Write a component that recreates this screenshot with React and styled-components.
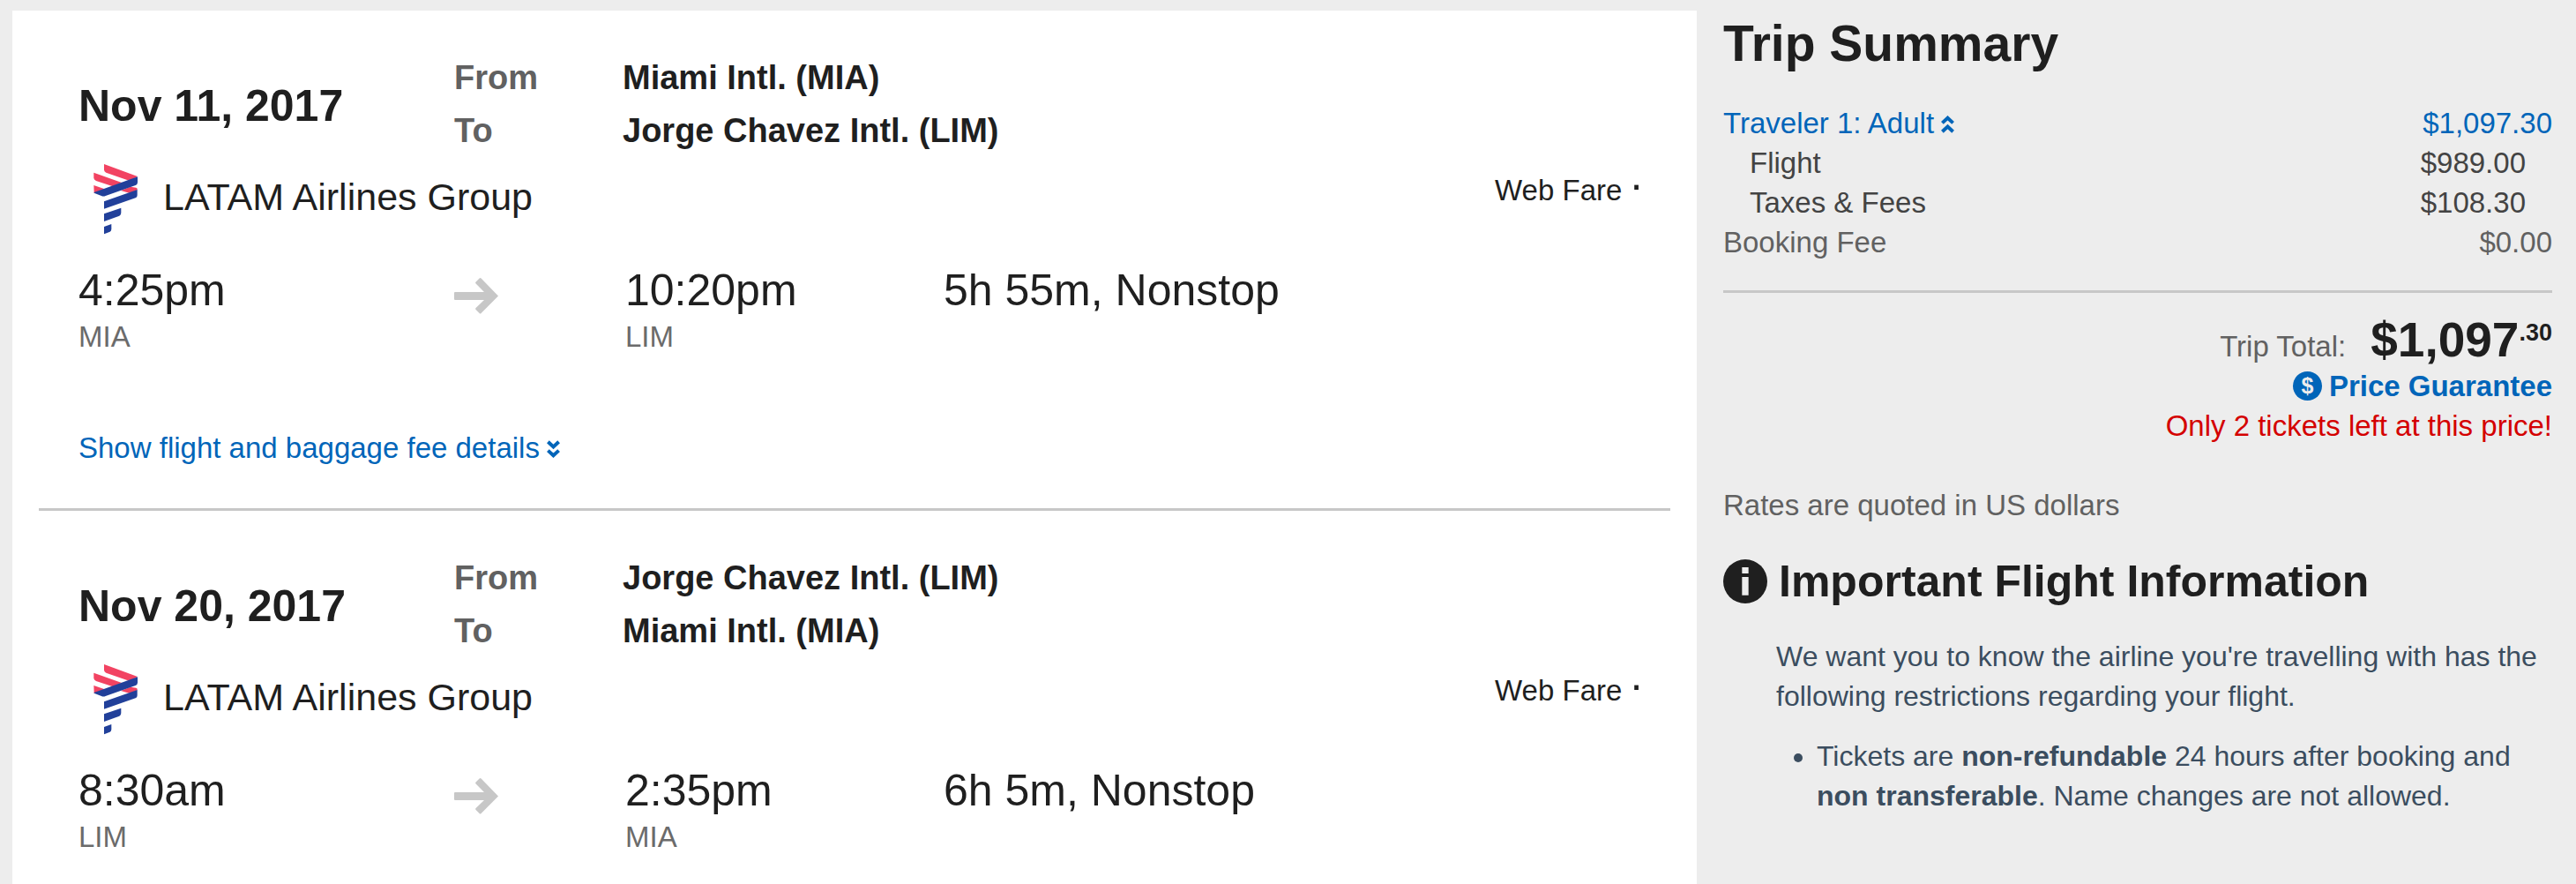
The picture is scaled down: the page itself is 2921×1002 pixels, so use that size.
import React from 'react';
import styled, { createGlobalStyle } from 'styled-components';

const GlobalStyle = createGlobalStyle`
    * {
        box-sizing: border-box;
    }

    body {
        margin: 0;
        background-color: #ededed;
        color: #1f1f1f;
        font-family: "Liberation Sans", Arial, sans-serif;
        font-size: 33px;
        line-height: 45px;
    }
`;

const Page = styled.div`
    display: grid;
    grid-template-columns: minmax(0, 1910fr) minmax(0, 940fr);
    column-gap: 30px;
    min-height: 100vh;
    padding: 12px 27px 0 14px;
`;

const Flights = styled.main`
    background-color: #fff;
    padding: 0 30px;
`;

const Leg = styled.section`
    padding: 46px 30px 46px 45px;

    & + & {
        border-top: 3px solid #c7c7c7;
    }
`;

const LegHeader = styled.header`
    display: grid;
    grid-template-columns: 426fr 191fr 1158fr;
    align-items: center;
`;

const LegDate = styled.h2`
    margin: 0;
    padding-top: 4px;
    font-size: 50px;
    line-height: 60px;
`;

const Route = styled.dl`
    grid-column: 2 / 4;
    display: grid;
    grid-template-columns: 191fr 1158fr;
    margin: 0;
    font-size: 38px;
    font-weight: bold;
    line-height: 60px;

    dt {
        color: #616161;
    }

    dd {
        margin: 0;
    }
`;

const AirlineRow = styled.div`
    display: flex;
    align-items: flex-start;
    gap: 16px;
    margin-top: 8px;
`;

const AirlineLogo = styled.svg`
    width: 80px;
    height: 80px;
`;

const AirlineName = styled.span`
    font-size: 43px;
    line-height: 74px;
`;

const Fare = styled.span`
    display: flex;
    align-items: flex-start;
    margin-left: auto;
    line-height: 60px;
`;

const FareMark = styled.span`
    padding-left: 8px;
    font-size: 50px;
    line-height: 46px;
`;

const Times = styled.div`
    display: grid;
    grid-template-columns: 426fr 194fr 361fr 794fr;
    align-items: start;
    margin-top: 33px;
`;

const Time = styled.div`
    font-size: 50px;
    line-height: 60px;
`;

const Airport = styled.div`
    color: #6b6b6b;
`;

const Arrow = styled.svg`
    width: 50px;
    height: 41px;
    margin-top: 16px;
`;

const LinkButton = styled.button`
    display: inline-flex;
    align-items: center;
    gap: 8px;
    padding: 0;
    border: 0;
    background: none;
    color: #0065b9;
    font: inherit;
    text-align: left;
    cursor: pointer;

    &:hover {
        text-decoration: underline;
    }
`;

const DetailsButton = styled(LinkButton)`
    display: flex;
    margin-top: 81px;
`;

const ChevronIcon = styled.svg`
    width: 15px;
    height: 20px;
    margin-top: 2px;
    transform: ${props => (props.$down ? 'rotate(180deg)' : 'none')};
`;

const Summary = styled.aside`
    min-width: 0;
`;

const SummaryTitle = styled.h1`
    margin: 0 0 31px;
    font-size: 57px;
    line-height: 74px;
`;

const PriceTable = styled.table`
    width: 100%;
    border-collapse: collapse;
`;

const PriceRow = styled.tr`
    color: ${props => props.$color};

    th {
        padding: 0 0 0 ${props => (props.$indent ? '30px' : '0')};
        font-weight: normal;
        text-align: left;
    }

    td {
        padding: 0 ${props => (props.$indent ? '30px' : '0')} 0 0;
        text-align: right;
    }
`;

const Total = styled.div`
    display: flex;
    justify-content: flex-end;
    align-items: baseline;
    gap: 28px;
    margin-top: 32px;
    padding-top: 23px;
    border-top: 3px solid #c7c7c7;
    color: #616161;
`;

const TotalPrice = styled.strong`
    color: #1f1f1f;
    font-size: 55px;
    line-height: 60px;

    sup {
        font-size: 27px;
        line-height: 0;
        vertical-align: 18px;
    }
`;

const Guarantee = styled.a`
    display: flex;
    justify-content: flex-end;
    align-items: center;
    gap: 8px;
    color: #0065b9;
    font-weight: bold;
    text-decoration: none;
`;

const Coin = styled.span`
    width: 33px;
    height: 33px;
    border-radius: 50%;
    background-color: #0065b9;
    color: #ededed;
    font-size: 25px;
    line-height: 33px;
    text-align: center;
`;

const Warning = styled.p`
    margin: 0;
    color: #d40000;
    text-align: right;
`;

const RatesNote = styled.p`
    margin: 45px 0 34px;
    color: #616161;
`;

const InfoTitle = styled.h2`
    display: flex;
    align-items: center;
    gap: 13px;
    margin: 0 0 33px;
    font-size: 50px;
    line-height: 60px;
`;

const InfoIcon = styled.svg`
    width: 50px;
    height: 50px;
`;

const InfoText = styled.div`
    padding-left: 60px;
    color: #3b4d5f;
    font-size: 32px;

    p {
        margin: 0 0 23px;
    }

    ul {
        margin: 0;
        padding-left: 46px;
    }
`;

const legs = [
    {
        date: 'Nov 11, 2017',
        from: 'Miami Intl. (MIA)',
        to: 'Jorge Chavez Intl. (LIM)',
        departs: '4:25pm',
        origin: 'MIA',
        arrives: '10:20pm',
        destination: 'LIM',
        duration: '5h 55m, Nonstop',
        details: true,
    },
    {
        date: 'Nov 20, 2017',
        from: 'Jorge Chavez Intl. (LIM)',
        to: 'Miami Intl. (MIA)',
        departs: '8:30am',
        origin: 'LIM',
        arrives: '2:35pm',
        destination: 'MIA',
        duration: '6h 5m, Nonstop',
    },
];

const Chevrons = ({ down }) => (
    <ChevronIcon $down={down} viewBox="0 0 15 20" fill="none" stroke="currentColor" strokeWidth="4" aria-hidden="true">
        <path d="M1.4 8.4 7.5 2.7l6.1 5.7M1.4 18.2l6.1-5.7 6.1 5.7" />
    </ChevronIcon>
);

const LatamLogo = () => (
    <AirlineLogo viewBox="28 50 240 240" aria-hidden="true">
        <g fill="#f24362">
            <path d="M115 50 229 92 202 107 122 79Q115 76 115 69Z" />
            <path d="M80 79 175 113 145 126 88 107Q80 103 80 97Z" />
            <path d="M80 122 117 135 81 148Z" />
            <path d="M205 127 224 130Q230 132 228 138L203 149 172 140Z" />
        </g>
        <g fill="#21409a">
            <path d="M229 93V112Q229 119 222 122L120 158Q113 161 106 158L81 148V146Z" />
            <path d="M228 137V156Q228 163 222 165L115 202V177Z" />
            <path d="M173 199V216Q173 223 167 226L115 245V219Z" />
            <path d="M140 254V271Q140 277 135 280L115 288V263Z" />
        </g>
    </AirlineLogo>
);

const FlightLeg = ({ leg }) => (
    <Leg>
        <LegHeader>
            <LegDate>{leg.date}</LegDate>
            <Route>
                <dt>From</dt>
                <dd>{leg.from}</dd>
                <dt>To</dt>
                <dd>{leg.to}</dd>
            </Route>
        </LegHeader>

        <AirlineRow>
            <LatamLogo />
            <AirlineName>LATAM Airlines Group</AirlineName>
            <Fare>Web Fare <FareMark>·</FareMark></Fare>
        </AirlineRow>

        <Times>
            <div>
                <Time>{leg.departs}</Time>
                <Airport>{leg.origin}</Airport>
            </div>
            <Arrow viewBox="0 0 50 41" fill="#c7c7c7" aria-hidden="true">
                <path d="M1 16H34L24.6 6.6Q23.6 5.6 24.6 4.6L28.6.6Q29.6-.4 30.6.6L50 20.4 30.6 40Q29.6 41 28.6 40L24.6 36Q23.6 35 24.6 34L34 25H1Q0 25 0 24V17Q0 16 1 16Z" />
            </Arrow>
            <div>
                <Time>{leg.arrives}</Time>
                <Airport>{leg.destination}</Airport>
            </div>
            <Time>{leg.duration}</Time>
        </Times>

        {leg.details && (
            <DetailsButton type="button">
                Show flight and baggage fee details
                <Chevrons down />
            </DetailsButton>
        )}
    </Leg>
);

const App = () => {
    return (
        <>
            <GlobalStyle />
            <Page>
                <Flights>
                    {legs.map(leg => <FlightLeg key={leg.date} leg={leg} />)}
                </Flights>

                <Summary>
                    <SummaryTitle>Trip Summary</SummaryTitle>
                    <PriceTable>
                        <tbody>
                            <PriceRow $color="#0065b9">
                                <th scope="row">
                                    <LinkButton type="button">
                                        Traveler 1: Adult
                                        <Chevrons />
                                    </LinkButton>
                                </th>
                                <td>$1,097.30</td>
                            </PriceRow>
                            <PriceRow $color="#434343" $indent>
                                <th scope="row">Flight</th>
                                <td>$989.00</td>
                            </PriceRow>
                            <PriceRow $color="#434343" $indent>
                                <th scope="row">Taxes &amp; Fees</th>
                                <td>$108.30</td>
                            </PriceRow>
                            <PriceRow $color="#616161">
                                <th scope="row">Booking Fee</th>
                                <td>$0.00</td>
                            </PriceRow>
                        </tbody>
                    </PriceTable>

                    <Total>
                        <span>Trip Total:</span>
                        <TotalPrice>$1,097<sup>.30</sup></TotalPrice>
                    </Total>
                    <Guarantee href="#price-guarantee">
                        <Coin aria-hidden="true">$</Coin>
                        Price Guarantee
                    </Guarantee>
                    <Warning>Only 2 tickets left at this price!</Warning>

                    <RatesNote>Rates are quoted in US dollars</RatesNote>

                    <InfoTitle>
                        <InfoIcon viewBox="0 0 150 150" aria-hidden="true">
                            <circle cx="75" cy="75" r="75" fill="#1f1f1f" />
                            <path d="M64 27h22v21H64zM64 60h22v62H64z" fill="#ededed" />
                        </InfoIcon>
                        Important Flight Information
                    </InfoTitle>
                    <InfoText>
                        <p>
                            We want you to know the airline you're travelling with has the
                            following restrictions regarding your flight.
                        </p>
                        <ul>
                            <li>
                                Tickets are <b>non-refundable</b> 24 hours after booking
                                and <b>non transferable</b>. Name changes are not allowed.
                            </li>
                        </ul>
                    </InfoText>
                </Summary>
            </Page>
        </>
    );
};

export default App;
